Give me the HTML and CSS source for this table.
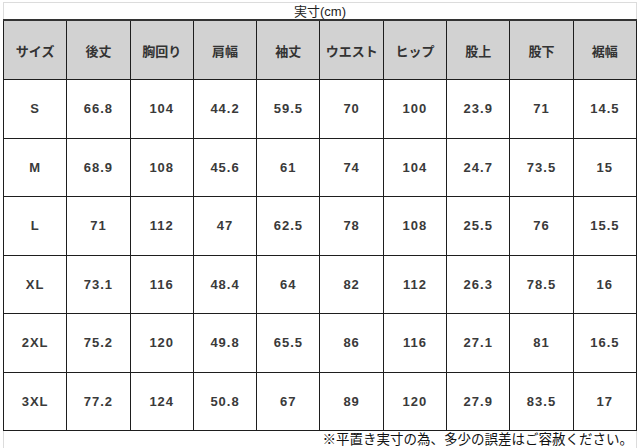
FILE: index.html
```html
<!DOCTYPE html>
<html lang="ja">
<head>
<meta charset="utf-8">
<link rel="stylesheet" href="styles.css">
</head>
<body>
<div class="sheet">
  <div class="title">実寸(cm)</div>
  <table class="size">
    <thead>
      <tr><th>サイズ</th><th>後丈</th><th>胸回り</th><th>肩幅</th><th>袖丈</th><th>ウエスト</th><th>ヒップ</th><th>股上</th><th>股下</th><th>裾幅</th></tr>
    </thead>
    <tbody>
      <tr><td>S</td><td>66.8</td><td>104</td><td>44.2</td><td>59.5</td><td>70</td><td>100</td><td>23.9</td><td>71</td><td>14.5</td></tr>
      <tr><td>M</td><td>68.9</td><td>108</td><td>45.6</td><td>61</td><td>74</td><td>104</td><td>24.7</td><td>73.5</td><td>15</td></tr>
      <tr><td>L</td><td>71</td><td>112</td><td>47</td><td>62.5</td><td>78</td><td>108</td><td>25.5</td><td>76</td><td>15.5</td></tr>
      <tr><td>XL</td><td>73.1</td><td>116</td><td>48.4</td><td>64</td><td>82</td><td>112</td><td>26.3</td><td>78.5</td><td>16</td></tr>
      <tr><td>2XL</td><td>75.2</td><td>120</td><td>49.8</td><td>65.5</td><td>86</td><td>116</td><td>27.1</td><td>81</td><td>16.5</td></tr>
      <tr><td>3XL</td><td>77.2</td><td>124</td><td>50.8</td><td>67</td><td>89</td><td>120</td><td>27.9</td><td>83.5</td><td>17</td></tr>
    </tbody>
  </table>
  <div class="note">※平置き実寸の為、多少の誤差はご容赦ください。</div>
</div>
</body>
</html>
```
FILE: styles.css
```css
html, body {
  margin: 0;
  padding: 0;
  background: #ffffff;
}
body {
  font-family: "Liberation Sans", "Noto Sans CJK JP", sans-serif;
  color: #222;
}
.sheet {
  margin: 2px 0 0 3px;
  width: 634px;
}
.title {
  height: 16px;
  border: 1px solid #dcdcdc;
  border-bottom: none;
  text-align: center;
  font-size: 13px;
  line-height: 17px;
  color: #222;
}
.size {
  border-collapse: collapse;
  width: 634px;
  table-layout: fixed;
}
.size th,
.size td {
  border: 1px solid #1e1e1e;
  text-align: center;
  padding: 0;
}
.size th {
  background: #d2d2d2;
  height: 58px;
  font-size: 13px;
  font-weight: bold;
  color: #333;
  border-top: 2px solid #333;
}
.size td {
  height: 57.5px;
  font-size: 13px;
  font-weight: bold;
  letter-spacing: 1px;
  color: #3a3a3a;
}
.note {
  height: 17px;
  border: 1px solid #dcdcdc;
  border-top: none;
  text-align: right;
  font-size: 13.5px;
  line-height: 17px;
  padding-right: 3px;
  color: #111;
}
```
